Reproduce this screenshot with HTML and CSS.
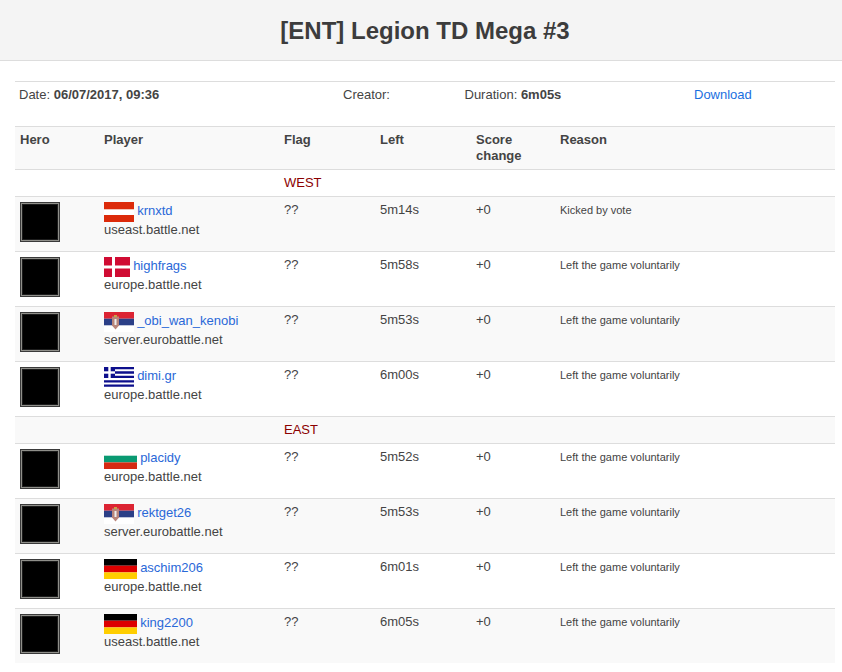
FILE: index.html
```html
<!DOCTYPE html>
<html lang="en">
<head>
<meta charset="utf-8">
<title>[ENT] Legion TD Mega #3</title>
<link rel="stylesheet" href="styles.css">
</head>
<body>
<header class="page-header"><h1>[ENT] Legion TD Mega #3</h1></header>
<main class="content">
<table class="info">
<colgroup><col class="i1"><col class="i2"><col class="i3"><col class="i4"></colgroup>
<tr>
<td>Date: <b>06/07/2017, 09:36</b></td>
<td>Creator:</td>
<td>Duration: <b>6m05s</b></td>
<td><a href="#" class="dl">Download</a></td>
</tr>
</table>
<table class="players">
<colgroup><col class="c1"><col class="c2"><col class="c3"><col class="c4"><col class="c5"><col class="c6"></colgroup>
<thead>
<tr><th>Hero</th><th>Player</th><th>Flag</th><th>Left</th><th>Score<br>change</th><th>Reason</th></tr>
</thead>
<tbody>
<tr><td></td><td></td><td class="team">WEST</td><td></td><td></td><td></td></tr>
<tr>
<td><span class="hero"></span></td>
<td><svg class="flag" width="30" height="20" viewBox="0 0 30 20"><rect width="30" height="20" fill="#fff"/><rect width="30" height="7" fill="#dc2a0a"/><rect y="13" width="30" height="7" fill="#dc2a0a"/><rect y="7" width="30" height="1" fill="#f4c4b8"/></svg> <a href="#">krnxtd</a><br>useast.battle.net</td>
<td>??</td><td>5m14s</td><td>+0</td><td class="reason">Kicked by vote</td>
</tr>
<tr>
<td><span class="hero"></span></td>
<td><svg class="flag" width="26" height="20" viewBox="0 0 26 20"><rect width="26" height="20" fill="#d00c33"/><rect x="8" width="3" height="20" fill="#fff"/><rect y="8.500" width="26" height="3" fill="#fff"/></svg> <a href="#">highfrags</a><br>europe.battle.net</td>
<td>??</td><td>5m58s</td><td>+0</td><td class="reason">Left the game voluntarily</td>
</tr>
<tr>
<td><span class="hero"></span></td>
<td><svg class="flag" width="30" height="20" viewBox="0 0 30 20"><rect width="30" height="20" fill="#fff"/><rect width="30" height="6.700" fill="#dc2433"/><rect y="6.700" width="30" height="6.600" fill="#2b3f87"/><path d="M8 4.500h7v9l-3.500 4-3.500-4z" fill="#b9857a"/><rect x="10" y="3" width="3" height="2" fill="#c9a24a"/><rect x="10.500" y="7" width="2" height="6" fill="#eee"/></svg> <a href="#">_obi_wan_kenobi</a><br>server.eurobattle.net</td>
<td>??</td><td>5m53s</td><td>+0</td><td class="reason">Left the game voluntarily</td>
</tr>
<tr>
<td><span class="hero"></span></td>
<td><svg class="flag" width="30" height="20" viewBox="0 0 30 20"><rect width="30" height="20" fill="#fff"/><path d="M0 1.100h30M0 5.500h30M0 9.900h30M0 14.300h30M0 18.700h30" stroke="#0d0f8c" stroke-width="2.300"/><rect width="11" height="11" fill="#0d0f8c"/><rect x="4.300" width="2.400" height="11" fill="#fff"/><rect y="4.300" width="11" height="2.400" fill="#fff"/></svg> <a href="#">dimi.gr</a><br>europe.battle.net</td>
<td>??</td><td>6m00s</td><td>+0</td><td class="reason">Left the game voluntarily</td>
</tr>
<tr><td></td><td></td><td class="team">EAST</td><td></td><td></td><td></td></tr>
<tr>
<td><span class="hero"></span></td>
<td><svg class="flag" width="33" height="20" viewBox="0 0 33 20"><rect width="33" height="20" fill="#fff"/><rect y="6.700" width="33" height="6.700" fill="#0a9a72"/><rect y="13.400" width="33" height="6.600" fill="#d62a12"/></svg> <a href="#">placidy</a><br>europe.battle.net</td>
<td>??</td><td>5m52s</td><td>+0</td><td class="reason">Left the game voluntarily</td>
</tr>
<tr>
<td><span class="hero"></span></td>
<td><svg class="flag" width="30" height="20" viewBox="0 0 30 20"><rect width="30" height="20" fill="#fff"/><rect width="30" height="6.700" fill="#dc2433"/><rect y="6.700" width="30" height="6.600" fill="#2b3f87"/><path d="M8 4.500h7v9l-3.500 4-3.500-4z" fill="#b9857a"/><rect x="10" y="3" width="3" height="2" fill="#c9a24a"/><rect x="10.500" y="7" width="2" height="6" fill="#eee"/></svg> <a href="#">rektget26</a><br>server.eurobattle.net</td>
<td>??</td><td>5m53s</td><td>+0</td><td class="reason">Left the game voluntarily</td>
</tr>
<tr>
<td><span class="hero"></span></td>
<td><svg class="flag" width="33" height="20" viewBox="0 0 33 20"><rect width="33" height="6.700" fill="#000"/><rect y="6.700" width="33" height="6.700" fill="#dd0000"/><rect y="13.400" width="33" height="6.600" fill="#ffce00"/></svg> <a href="#">aschim206</a><br>europe.battle.net</td>
<td>??</td><td>6m01s</td><td>+0</td><td class="reason">Left the game voluntarily</td>
</tr>
<tr>
<td><span class="hero"></span></td>
<td><svg class="flag" width="33" height="20" viewBox="0 0 33 20"><rect width="33" height="6.700" fill="#000"/><rect y="6.700" width="33" height="6.700" fill="#dd0000"/><rect y="13.400" width="33" height="6.600" fill="#ffce00"/></svg> <a href="#">king2200</a><br>useast.battle.net</td>
<td>??</td><td>6m05s</td><td>+0</td><td class="reason">Left the game voluntarily</td>
</tr>
</tbody>
</table>
</main>
</body>
</html>
```
FILE: styles.css
```css
html, body {
  margin: 0;
  padding: 0;
  background: #fff;
}
body {
  font-family: "Liberation Sans", Arial, sans-serif;
  font-size: 13px;
  line-height: 16px;
  color: #444;
  overflow: hidden;
}
.page-header {
  background: #f4f4f4;
  border-bottom: 1px solid #ddd;
  display: flex;
  align-items: center;
  justify-content: center;
  padding-left: 8px;
  padding-top: 2px;
  height: 58px;
}
h1 {
  margin: 0;
  font-size: 24px;
  line-height: 28px;
  font-weight: bold;
  color: #3c3c3c;
}
.content {
  margin: 20px 7px 0 15px;
}
table {
  border-collapse: collapse;
  table-layout: fixed;
  width: 820px;
}
.info td {
  border-top: 1px solid #ddd;
  padding: 5px 4px 23px;
  vertical-align: top;
}
.i1 { width: 324px; }
.i2 { width: 121.500px; }
.i3 { width: 229.500px; }
.i4 { width: 145px; }
.c1 { width: 84px; }
.c2 { width: 180px; }
.c3 { width: 96px; }
.c4 { width: 96px; }
.c5 { width: 84px; }
.c6 { width: 280px; }
.players th,
.players td {
  border-top: 1px solid #ddd;
  padding: 5px;
  text-align: left;
  vertical-align: top;
}
.players th {
  background: #f9f9f9;
  font-weight: bold;
}
.players tbody tr:nth-child(even) td {
  background: #f9f9f9;
}
.players tbody tr:nth-child(odd) td {
  background: #fff;
}
a {
  color: #2a68d8;
  text-decoration: none;
}
.dl {
  color: #1a6fe0;
}
.team {
  color: #8b0000;
}
.players .reason {
  font-size: 11px;
}
.flag {
  vertical-align: middle;
  margin-right: -0.500px;
}
.hero {
  display: block;
  box-sizing: border-box;
  width: 40px;
  height: 40px;
  margin-bottom: 4px;
  background: #000;
  border: 2px solid #8f8f8a;
  outline: 1px solid #3a3a3a;
  outline-offset: -1px;
  box-shadow: inset 0 0 0 1px #1c1c1c;
}
```
